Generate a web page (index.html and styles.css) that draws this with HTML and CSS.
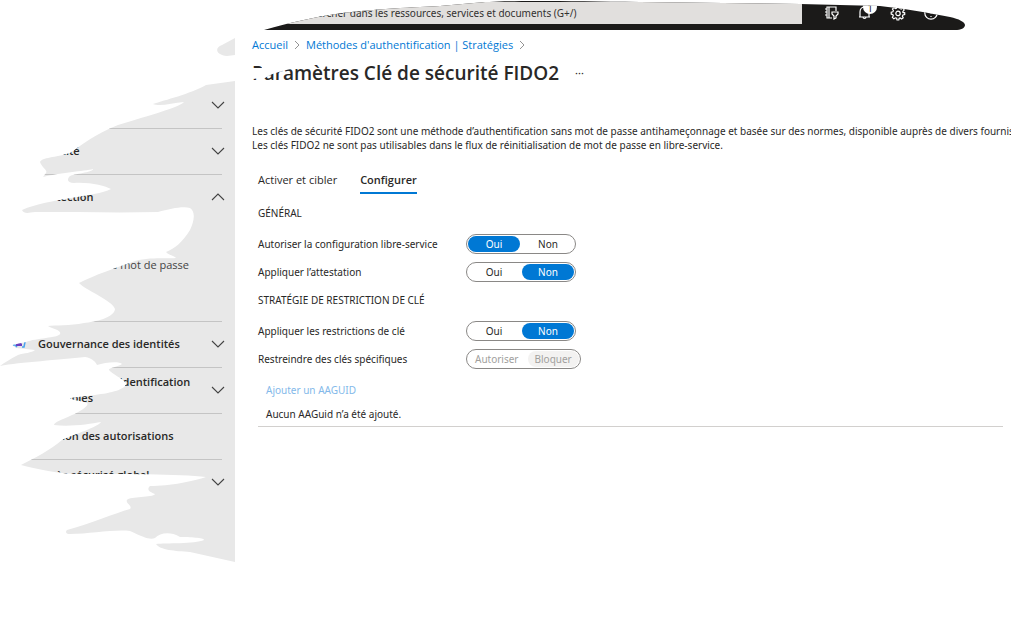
FILE: index.html
```html
<!DOCTYPE html>
<html lang="fr">

<head>
  <meta charset="UTF-8">
  <meta name="viewport" content="width=device-width, initial-scale=1.0">
  <title>Paramètres Clé de sécurité FIDO2</title>
  <link rel="stylesheet" href="styles.css">
</head>

<body>
  <!-- Torn edges and shared icons -->
  <svg class="defs" width="0" height="0" aria-hidden="true">
    <defs>
      <clipPath id="topbarEdge">
        <path d="M264 30C285 24 310 18 336 14C370 9 420 7 440 6L474 3C500 0 560 1 640 2L800 4L880 6C900 8 930 13 950 17C959 19 965 22 965 25C965 28 961 30 955 30Z" />
      </clipPath>
      <clipPath id="sidebarEdge">
        <path transform="translate(0 -30)" d="M235 38L222 45C214 48 216 55 227 56L235 55Z
          M235 81L206 85C190 94 165 100 153 104C160 107 172 103 184 102C178 108 150 115 118 125C95 134 80 146 70 153C55 158 42 157 40 162C42 168 48 170 46 173L43 177C58 173 85 171 93 169C94 172 73 174 70 176C66 180 68 183 74 183C90 182 105 186 111 189C95 197 50 198 22 210C24 214 28 213 35 212C80 212 120 213 158 212C170 209 182 206 190 208C196 212 194 222 190 230C182 243 175 248 166 252C168 255 175 256 176 258C165 259 150 257 135 261C115 268 95 275 79 283C85 290 112 300 115 309C114 318 95 322 84 323C70 326 55 325 48 326C52 329 62 330 60 334C58 338 36 338 26 342L12 345L16 348L26 349L35 350C32 353 24 353 18 355C10 359 4 363 0 366C20 362 60 360 85 357C93 358 96 363 97 365C105 362 120 361 122 364C118 367 108 368 109 370C112 374 122 378 126 383C127 389 112 393 95 395L70 398C72 400 78 400 87 403C90 405 80 412 72 415C62 420 54 422 54 425C70 427 90 424 101 422C98 427 75 434 62 440C50 450 35 458 21 465C35 469 60 474 80 474C120 474 180 474 206 477C195 481 170 486 150 486C146 490 150 492 155 494C153 498 130 496 127 500C125 503 133 506 130 509C115 513 90 524 67 530C65 532 66 534 70 534C90 534 115 529 130 531C145 538 150 540 155 538C160 533 170 531 180 537C190 537 205 538 204 540C195 544 165 543 156 544C160 550 175 551 190 552L235 562Z" />
      </clipPath>
      <symbol id="chevron" viewBox="0 0 14 8">
        <path d="M1 1L7 7L13 1" fill="none" stroke="#444" stroke-width="1.1" />
      </symbol>
      <symbol id="crumb" viewBox="0 0 6 10">
        <path d="M1 1L5 5L1 9" fill="none" stroke="#888" stroke-width="0.9" />
      </symbol>
    </defs>
  </svg>

  <header class="topbar">
    <input class="search" type="search" aria-label="Rechercher" placeholder="Rechercher dans les ressources, services et documents (G+/)">
    <button class="tool" type="button" aria-label="Filtre d'annuaire">
      <svg width="16" height="16" viewBox="0 0 16 16">
        <path d="M8 13H3V2H12V6M3 4H1M3 7H1M3 10H1M5 2V13M8 7H14V9L12 11V13L10 14V11L8 9Z" />
      </svg>
    </button>
    <button class="tool" type="button" aria-label="Notifications">
      <svg width="16" height="16" viewBox="0 0 16 16">
        <path d="M2 12H13M3 12V7C3 3 5 2 8 2M12 12V8M6 12C6 14 9 14 9 12" />
      </svg>
      <span class="badge">1</span>
    </button>
    <button class="tool" type="button" aria-label="Paramètres">
      <svg width="16" height="16" viewBox="0 0 16 16">
        <path d="M6.7 1.5H9.3L9.7 3.4L11.2 4L12.8 3L14.2 5L12.9 6.4V7.4L14.7 7.8V9.6L12.9 10L12.4 11.2L13.2 12.8L11.6 14L10.2 13L9.2 13.3L8.8 15H7L6.7 13.3L5.4 12.8L3.9 13.8L2.4 12.3L3.3 10.8L2.8 9.6L1.2 9.1V7.2L2.9 6.8L3.4 5.5L2.4 4L4 2.5L5.4 3.6L6.4 3.2Z" />
        <circle cx="8" cy="8.4" r="2.2" />
      </svg>
    </button>
    <button class="tool" type="button" aria-label="Aide">
      <svg width="16" height="16" viewBox="0 0 16 16">
        <circle cx="8" cy="8" r="6.2" />
        <path d="M6 6C6 4 10 4 10 6C10 7.500 8 7.500 8 9M8 11V12" />
      </svg>
    </button>
  </header>

  <div class="layout">
    <nav class="sidebar" aria-label="Menu">
      <div class="item"><svg class="chevron"><use href="#chevron" /></svg></div>
      <div class="item"><span>Identité</span><svg class="chevron"><use href="#chevron" /></svg></div>
      <div class="group">
        <div class="item"><span>Protection</span><svg class="chevron up"><use href="#chevron" /></svg></div>
        <a class="sub" href="#">Réinit. du mot de passe</a>
      </div>
      <div class="item">
        <svg class="item-icon" width="14" height="14" viewBox="0 0 14 14">
          <path d="M1 8H3L5 10M10 10H12L13 5" fill="none" stroke="#4aa3ee" stroke-width="1.500" />
          <path d="M4 9V7H5L6 5L7 6L8 5L10 7V9Z" fill="#6a3fc0" />
        </svg>
        <span>Gouvernance des identités</span><svg class="chevron"><use href="#chevron" /></svg>
      </div>
      <div class="item"><span>Informations d'identification<br>vérifiables</span><svg class="chevron"><use href="#chevron" /></svg></div>
      <div class="item"><span>Gestion des autorisations</span></div>
      <div class="item last"><span>Accès sécurisé global</span><svg class="chevron"><use href="#chevron" /></svg></div>
    </nav>

    <main class="content">
      <nav class="breadcrumb" aria-label="Fil d'Ariane">
        <a href="#">Accueil</a>
        <svg width="6" height="10"><use href="#crumb" /></svg>
        <a href="#">Méthodes d'authentification | Stratégies</a>
        <svg width="6" height="10"><use href="#crumb" /></svg>
      </nav>

      <div class="title-row">
        <h1>Paramètres Clé de sécurité FIDO2</h1>
        <button class="more" type="button" aria-label="Plus">···</button>
        <svg class="smear" width="60" height="24" viewBox="0 0 60 24" aria-hidden="true">
          <path d="M0 9H11V0H56L50 8C40 10 22 13 14 19L0 20Z" fill="#fff" />
        </svg>
      </div>

      <p class="intro">Les clés de sécurité FIDO2 sont une méthode d’authentification sans mot de passe antihameçonnage et basée sur des normes, disponible auprès de divers fournisseurs.<br>
        Les clés FIDO2 ne sont pas utilisables dans le flux de réinitialisation de mot de passe en libre-service.</p>

      <div class="panel">
        <div class="tabs" role="tablist">
          <button class="tab" type="button" role="tab" aria-selected="false">Activer et cibler</button>
          <button class="tab active" type="button" role="tab" aria-selected="true">Configurer</button>
        </div>

        <form>
          <h2>GÉNÉRAL</h2>
          <div class="row" role="radiogroup" aria-labelledby="selfService">
            <span id="selfService">Autoriser la configuration libre-service</span>
            <div class="toggle">
              <label><input type="radio" name="selfService" checked><span>Oui</span></label>
              <label><input type="radio" name="selfService"><span>Non</span></label>
            </div>
          </div>
          <div class="row" role="radiogroup" aria-labelledby="attestation">
            <span id="attestation">Appliquer l’attestation</span>
            <div class="toggle">
              <label><input type="radio" name="attestation"><span>Oui</span></label>
              <label><input type="radio" name="attestation" checked><span>Non</span></label>
            </div>
          </div>

          <h2>STRATÉGIE DE RESTRICTION DE CLÉ</h2>
          <div class="row" role="radiogroup" aria-labelledby="restrictions">
            <span id="restrictions">Appliquer les restrictions de clé</span>
            <div class="toggle">
              <label><input type="radio" name="restrictions"><span>Oui</span></label>
              <label><input type="radio" name="restrictions" checked><span>Non</span></label>
            </div>
          </div>
          <div class="row" role="radiogroup" aria-labelledby="keys">
            <span id="keys">Restreindre des clés spécifiques</span>
            <div class="toggle disabled">
              <label><input type="radio" name="keys" disabled><span>Autoriser</span></label>
              <label><input type="radio" name="keys" checked disabled><span>Bloquer</span></label>
            </div>
          </div>
        </form>

        <a class="add" href="#" aria-disabled="true">Ajouter un AAGUID</a>
        <p class="empty">Aucun AAGuid n’a été ajouté.</p>
      </div>
    </main>
  </div>
</body>

</html>
```
FILE: styles.css
```css
* {
  box-sizing: border-box;
}

body {
  margin: 0;
  background: #fff;
  color: #292827;
  font-family: "Noto Sans", "Open Sans", sans-serif;
  font-size: 10px;
  line-height: 14px;
}

button,
input {
  font: inherit;
  color: inherit;
}

button {
  padding: 0;
  border: none;
  background: none;
}

a {
  color: #0078d4;
  text-decoration: none;
}

.defs {
  position: absolute;
}

/* Top bar */
.topbar {
  display: flex;
  height: 30px;
  padding: 2px 0 6px 264px;
  background: #1b1a19;
  clip-path: url(#topbarEdge);
}

.search {
  width: 538px;
  padding: 0 0 0 30px;
  border: none;
  background: #e1dfdd;
}

.search::placeholder {
  color: #323130;
}

.tool {
  position: relative;
  width: 33px;
  height: 22px;
}

.search + .tool {
  margin-left: 13px;
}

.tool svg {
  display: block;
  margin: 0 auto;
  fill: none;
  stroke: #fff;
  stroke-width: 1.2;
}

.badge {
  position: absolute;
  top: -2px;
  left: 15px;
  width: 14px;
  height: 14px;
  border-radius: 50%;
  background: #fff;
  line-height: 16px;
}

.layout {
  display: flex;
}

/* Sidebar */
.sidebar {
  flex: 0 0 235px;
  height: 534px;
  padding: 53px 13px 0 12px;
  background: #e8e8e8;
  font-family: "Open Sans", "Noto Sans", sans-serif;
  font-size: 11px;
  font-weight: 600;
  clip-path: url(#sidebarEdge);
}

.item {
  display: flex;
  align-items: center;
  height: 46px;
  padding: 0 0 2px 26px;
  border-bottom: 1px solid #c4c4c4;
  line-height: 16px;
}

.item span {
  flex: 1;
  white-space: nowrap;
}

.group {
  height: 147px;
  border-bottom: 1px solid #c4c4c4;
}

.group .item,
.item.last {
  border: none;
}

.item.last span {
  padding-bottom: 14px;
}

.item-icon {
  margin-left: -26px;
  margin-right: 12px;
}

.chevron {
  flex: none;
  width: 14px;
  height: 8px;
  margin: 0 -3px 0 auto;
}

.up {
  transform: rotate(180deg);
}

.sub {
  display: block;
  padding: 37px 33px 0 0;
  color: #444;
  font-weight: 400;
  text-align: right;
}

/* Content */
.content {
  flex: 1;
  min-width: 0;
  padding: 8px 12px 0 17px;
}

.breadcrumb {
  display: flex;
  align-items: center;
  gap: 6px;
  font-family: "Open Sans", "Noto Sans", sans-serif;
  font-size: 11px;
}

.title-row {
  position: relative;
  display: flex;
  align-items: center;
  gap: 16px;
  height: 28px;
  margin-top: 7px;
}

.title-row h1 {
  margin: 0;
  font-family: "Open Sans", "Noto Sans", sans-serif;
  font-size: 19px;
  font-weight: 600;
  line-height: 28px;
}

.more {
  font-size: 11px;
}

.smear {
  position: absolute;
  top: 0;
  left: -1px;
}

.intro {
  margin: 37px 0 0;
  overflow: hidden;
  white-space: nowrap;
}

.panel {
  padding: 0 8px 0 6px;
}

.tabs {
  display: flex;
  gap: 23px;
  margin-top: 19px;
}

.tab {
  height: 23px;
  padding-bottom: 4px;
  border-bottom: 2px solid transparent;
  font-family: "Open Sans", "Noto Sans", sans-serif;
  font-size: 11px;
}

.tab.active {
  border-color: #0078d4;
  font-weight: 600;
}

h2 {
  margin: 11px 0 14px;
  font-size: 10px;
  font-weight: 400;
  line-height: 14px;
}

.tabs + form {
  margin-top: 12px;
}

.row {
  display: flex;
  align-items: center;
  margin-bottom: 8px;
}

.row > span {
  width: 208px;
}

.toggle {
  display: flex;
  gap: 2px;
  padding: 1px;
  border: 1px solid #8a8886;
  border-radius: 10px;
}

.toggle label {
  position: relative;
}

.toggle input {
  position: absolute;
  margin: 0;
  appearance: none;
}

.toggle label span {
  display: block;
  width: 52px;
  border-radius: 8px;
  line-height: 16px;
  text-align: center;
}

.toggle input:checked + span {
  background: #0078d4;
  color: #fff;
}

.toggle.disabled {
  color: #a19f9d;
}

.toggle.disabled label span {
  width: auto;
  padding: 0 7px;
}

.toggle.disabled input:checked + span {
  background: #f3f2f1;
  color: #a19f9d;
}

.add {
  display: inline-block;
  margin: 6px 0 0 8px;
  color: #83b9ea;
}

.empty {
  margin: 10px 0 0;
  padding: 0 8px 5px;
  border-bottom: 1px solid #d2d0ce;
}
```
